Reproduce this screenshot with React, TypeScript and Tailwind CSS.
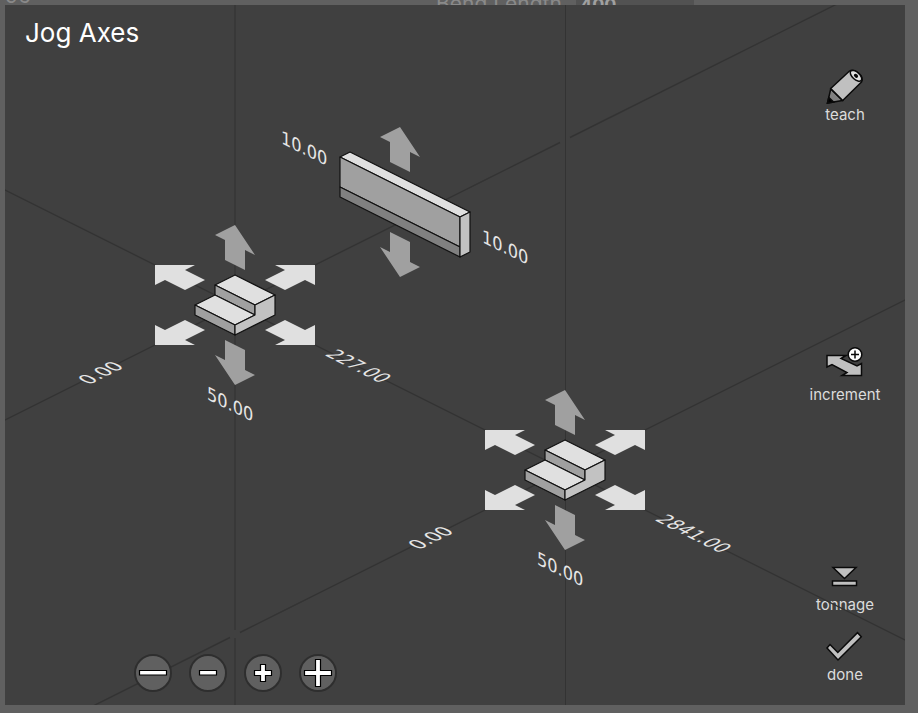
import React from "react";

const UI_FONT = "font-['Inter',sans-serif]";

type Direction = "up" | "down" | "upLeft" | "upRight" | "downLeft" | "downRight";

const arrows: Record<Direction, { points: string; place: string; box: string; fill: string; label: string }> = {
  up: {
    points: "20,0 40,30 30,25 30,45 10,35 10,15 0,10",
    place: "left-[60px] top-0 h-[45px] w-10",
    box: "0 0 40 45",
    fill: "#a0a0a0",
    label: "up",
  },
  down: {
    points: "10,0 30,10 30,30 40,35 20,45 0,15 10,20",
    place: "bottom-0 left-[60px] h-[45px] w-10",
    box: "0 0 40 45",
    fill: "#a0a0a0",
    label: "down",
  },
  upLeft: {
    points: "0,0 40,0 30,5 50,15 30,25 10,15 0,20",
    place: "left-0 top-10 h-[25px] w-[50px]",
    box: "0 0 50 25",
    fill: "#e0e0e0",
    label: "left",
  },
  upRight: {
    points: "50,0 10,0 20,5 0,15 20,25 40,15 50,20",
    place: "right-0 top-10 h-[25px] w-[50px]",
    box: "0 0 50 25",
    fill: "#e0e0e0",
    label: "back",
  },
  downLeft: {
    points: "0,25 40,25 30,20 50,10 30,0 10,10 0,5",
    place: "bottom-10 left-0 h-[25px] w-[50px]",
    box: "0 0 50 25",
    fill: "#e0e0e0",
    label: "forward",
  },
  downRight: {
    points: "50,25 10,25 20,20 0,10 20,0 40,10 50,5",
    place: "bottom-10 right-0 h-[25px] w-[50px]",
    box: "0 0 50 25",
    fill: "#e0e0e0",
    label: "right",
  },
};

function JogArrow({ axis, direction }: { axis: string; direction: Direction }) {
  const arrow = arrows[direction];
  return (
    <button type="button" aria-label={`${axis} ${arrow.label}`} className={`absolute ${arrow.place}`}>
      <svg viewBox={arrow.box} className="block h-full w-full">
        <polygon points={arrow.points} fill={arrow.fill} />
      </svg>
    </button>
  );
}

function Finger({ name, place }: { name: string; place: string }) {
  return (
    <div className={`absolute z-20 h-40 w-40 ${place}`}>
      <svg viewBox="0 0 160 160" className="absolute inset-0" stroke="#111" strokeWidth="1.2" strokeLinejoin="round">
        <polygon points="80,50 120,70 100,80 60,60" fill="#e0e0e0" />
        <polygon points="60,60 100,80 100,90 60,70" fill="#a0a0a0" />
        <polygon points="60,70 100,90 80,100 40,80" fill="#e0e0e0" />
        <polygon points="40,80 80,100 80,110 40,90" fill="#a0a0a0" />
        <polygon points="120,70 120,90 80,110 80,100 100,90 100,80" fill="#c2c2c2" />
      </svg>
      <JogArrow axis={name} direction="up" />
      <JogArrow axis={name} direction="down" />
      <JogArrow axis={name} direction="upLeft" />
      <JogArrow axis={name} direction="upRight" />
      <JogArrow axis={name} direction="downLeft" />
      <JogArrow axis={name} direction="downRight" />
    </div>
  );
}

function Ram() {
  return (
    <div className="absolute left-[315px] top-[122px] z-20 h-[150px] w-40">
      <svg viewBox="0 0 160 150" className="absolute inset-0" stroke="#111" strokeWidth="1.2" strokeLinejoin="round">
        <polygon points="30,25 150,85 140,90 20,30" fill="#e0e0e0" />
        <polygon points="20,30 140,90 140,120 20,60" fill="#a0a0a0" />
        <polygon points="20,60 140,120 140,130 20,70" fill="#808080" />
        <polygon points="150,85 150,125 140,130 140,90" fill="#c2c2c2" />
      </svg>
      <JogArrow axis="Ram" direction="up" />
      <JogArrow axis="Ram" direction="down" />
    </div>
  );
}

/* Axis guides and position read-outs, drawn in isometric projection. */
function AxisScene() {
  return (
    <svg className="pointer-events-none absolute inset-0 z-10 h-full w-full">
      <g stroke="#333" strokeWidth="1.4" fill="none">
        <path d="M230 0V625M230 633V2000" strokeWidth="2" stroke="#383838" />
        <path d="M560.5 0V2000" strokeWidth="1" />
        <path d="M-30 430L555 137.500M565 132.500L1160 -165" />
        <path d="M-30 170L1800 1085" />
        <path d="M-30 760L225 632.500M235 627.500L1800 -155" />
      </g>
      <g fill="#e6e6e6" className="font-['DejaVu_Sans_Condensed','Noto_Sans',sans-serif] text-[18px]">
        <text transform="matrix(1 .5 0 1 276 138)">10.00</text>
        <text transform="matrix(1 .5 0 1 477 237)">10.00</text>
        <text transform="matrix(1 .5 0 1 202 394)">50.00</text>
        <text transform="matrix(1 .5 0 1 532 559)">50.00</text>
        <text transform="matrix(1 -.5 1 .5 84 380)">0.00</text>
        <text transform="matrix(1 -.5 1 .5 414 545)">0.00</text>
        <text transform="matrix(1 .5 -1 .5 319 350)">227.00</text>
        <text transform="matrix(1 .5 -1 .5 649 515)">2841.00</text>
      </g>
    </svg>
  );
}

function ActionButton({ label, children }: { label: string; children: React.ReactNode }) {
  return (
    <button type="button" className="flex h-[70px] w-full shrink-0 flex-col items-center pt-0.5">
      <svg
        viewBox="0 0 40 40"
        className="h-10 w-10 shrink-0"
        fill="#c0c0c0"
        stroke="#0a0a0a"
        strokeWidth="1.5"
        strokeLinejoin="miter"
      >
        {children}
      </svg>
      <span className="text-[15px] leading-4 text-[#dcdcdc]">{label}</span>
    </button>
  );
}

function StepButton({ label, path }: { label: string; path: string }) {
  return (
    <button
      type="button"
      aria-label={label}
      className="size-[38px] rounded-full border-2 border-[#2e2e2e] bg-[#606060]"
    >
      <svg viewBox="0 0 34 34" className="block h-full w-full" fill="#fff" stroke="#000" strokeWidth="1.2">
        <path d={path} />
      </svg>
    </button>
  );
}

export default function App() {
  return (
    <div className={`relative flex min-h-screen flex-col overflow-hidden bg-[#606060] pb-2 pl-[5px] pr-[13px] ${UI_FONT}`}>
      <div className="relative h-[5px] shrink-0 overflow-hidden text-[21px] leading-5 text-[#8a8a8a]">
        <span className="absolute -top-[14px] left-0">96</span>
        <span className="absolute -top-[6px] left-[431px] whitespace-nowrap">Bend Length</span>
        <span className="absolute -top-[5px] left-[571px] w-[118px] bg-[#525252] pl-1 text-lg leading-5 font-bold text-[#a0a0a0]">
          400
        </span>
      </div>

      <main className="relative flex flex-1 justify-between overflow-hidden bg-[#404040]">
        <section className="flex flex-col justify-between">
          <h1 className="pl-5 pt-2 text-[26px] leading-10 text-white">Jog Axes</h1>
          <div className="relative z-20 flex gap-[17px] pb-[13px] pl-[129px]">
            <StepButton label="Decrease fast" path="M3.500 14.500H30.500V19H3.500Z" />
            <StepButton label="Decrease slow" path="M8.500 14.500H25.500V19H8.500Z" />
            <StepButton
              label="Increase slow"
              path="M14.500 8.500H19.500V14.500H25.500V19.500H19.500V25.500H14.500V19.500H8.500V14.500H14.500Z"
            />
            <StepButton
              label="Increase fast"
              path="M14.500 3.500H19.500V14.500H30.500V19.500H19.500V30.500H14.500V19.500H3.500V14.500H14.500Z"
            />
          </div>
        </section>

        <AxisScene />
        <Ram />
        <Finger name="Left finger" place="left-[150px] top-[220px]" />
        <Finger name="Right finger" place="left-[480px] top-[385px]" />

        <aside className="flex w-[120px] flex-col pb-2.5 pt-15">
          <ActionButton label="teach">
            <path d="M2.500 36L5.700 22L17.500 33.500Z" fill="#808080" />
            <path d="M2.500 36L3.800 30.500L8.500 35Z" fill="#000" />
            <path d="M5.700 21.500L24.500 4C29 1 40 9 36.500 15L17.700 33.500L5.700 21.500Z" />
            <ellipse cx="31" cy="8.800" rx="7" ry="3.600" transform="rotate(42 31 8.800)" fill="#e0e0e0" />
            <ellipse cx="31" cy="8.800" rx="1.600" ry="1" transform="rotate(42 31 8.800)" fill="#000" />
          </ActionButton>
          <div className="flex-[3]" />
          <ActionButton label="increment">
            <path d="M2 8.500H21L16 11.500L32 19L36.500 16.500V28.500H17L22 25.500L7 17.500L2 20Z" />
            <circle cx="30" cy="7.500" r="6.800" fill="#fff" />
            <path d="M26 7.500H34M30 3.500V11.500" fill="none" />
          </ActionButton>
          <div className="flex-[2]" />
          <ActionButton label="tonnage">
            <path d="M8 10.500H31L19.500 21.500Z" />
            <path d="M7.500 24H31.500V28.500H7.500Z" />
          </ActionButton>
          <ActionButton label="done">
            <path d="M5 17.500L12.800 25.500L32.500 5.700L36.300 9.700L13 33L2 21Z" />
          </ActionButton>
        </aside>
      </main>
    </div>
  );
}
